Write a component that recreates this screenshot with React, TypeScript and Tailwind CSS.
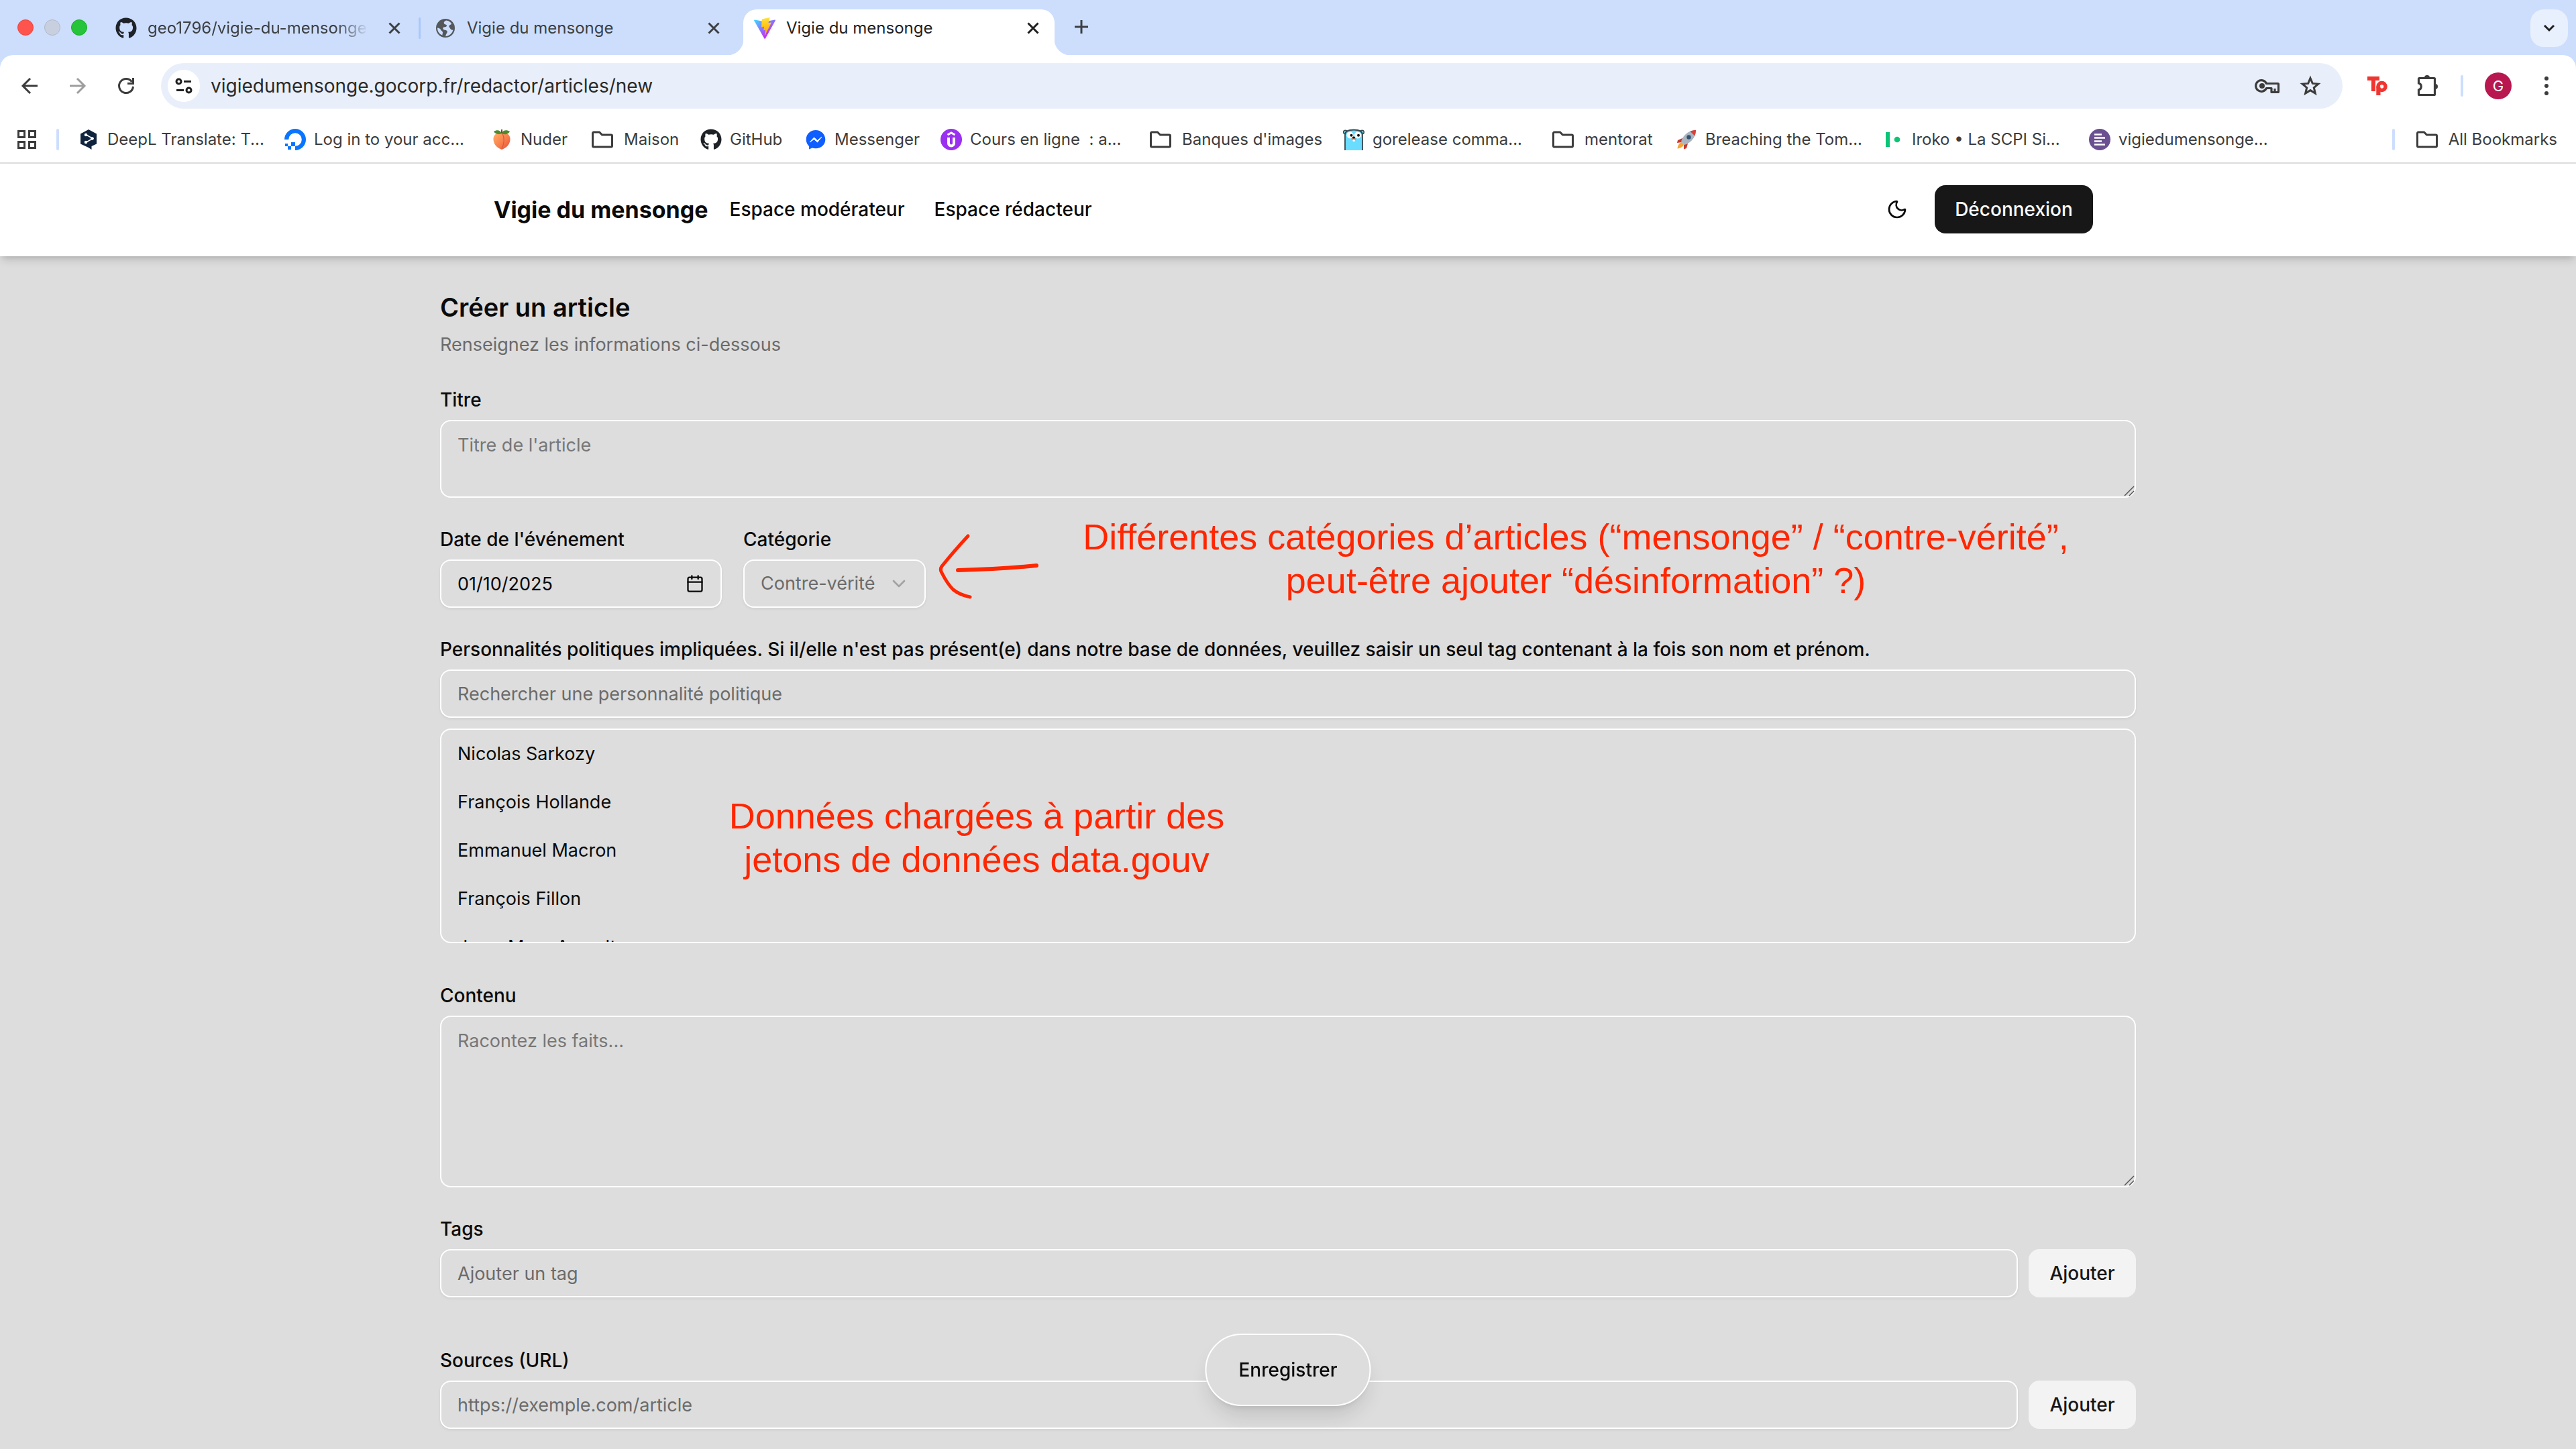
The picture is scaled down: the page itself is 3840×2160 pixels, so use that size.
import React from "react";
import { Calendar, ChevronDown, Moon } from "lucide-react";
import { FaGithub } from "react-icons/fa";

/* ---------- icons ---------- */

const CloseIcon = () => (
  <svg viewBox="0 0 32 32" className="size-8" fill="none" stroke="currentColor" strokeWidth="3">
    <path d="M8.500 8.500l15 15M23.500 8.500l-15 15" />
  </svg>
);

const ViteIcon = () => (
  <svg viewBox="0 0 256 257" className="size-8">
    <defs>
      <linearGradient id="vite-a" x1="0%" x2="58%" y1="8%" y2="79%">
        <stop offset="0%" stopColor="#41D1FF" />
        <stop offset="100%" stopColor="#BD34FE" />
      </linearGradient>
      <linearGradient id="vite-b" x1="43%" x2="50%" y1="2%" y2="89%">
        <stop offset="0%" stopColor="#FFEA83" />
        <stop offset="8%" stopColor="#FFDD35" />
        <stop offset="100%" stopColor="#FFA800" />
      </linearGradient>
    </defs>
    <path fill="url(#vite-a)" d="M255.153 37.938L134.897 252.976c-2.483 4.44-8.862 4.466-11.382.048L.875 37.958c-2.746-4.814 1.371-10.646 6.827-9.67l120.385 21.517a6.537 6.537 0 0 0 2.322-.004l117.867-21.483c5.438-.991 9.574 4.796 6.877 9.62Z" />
    <path fill="url(#vite-b)" d="M185.432.063L96.44 17.501a3.268 3.268 0 0 0-2.634 3.014l-5.474 92.456a3.268 3.268 0 0 0 3.997 3.378l24.777-5.718c2.318-.535 4.413 1.507 3.936 3.838l-7.361 36.047c-.495 2.426 1.782 4.5 4.151 3.78l15.304-4.649c2.372-.72 4.652 1.36 4.15 3.788l-11.698 56.621c-.732 3.542 3.979 5.473 5.943 2.437l1.313-2.028l72.516-144.72c1.215-2.423-.88-5.186-3.54-4.672l-25.505 4.922c-2.396.462-4.435-1.77-3.759-4.114l16.646-57.705c.677-2.35-1.37-4.583-3.769-4.113Z" />
  </svg>
);

const GlobeIcon = () => (
  <svg viewBox="0 0 32 32" className="size-8">
    <circle cx="16" cy="16" r="14" fill="#54585c" />
    <path d="M17 4.500c-2.500 1.200-4 2.700-3 4.700 1 1.600 3 .8 3.800 2.400.8 2-1.600 2.900-3.600 2.900-2 0-2.300 1.600-1.600 3 .8 1.400 4 .9 5.400 2.200 1.600 1.500.2 3.500-.6 4.900-.8 1.200-1 2.400-1.200 3.600 5.500-.4 10-4.300 11.200-9.600-2.600.4-3.700-1.200-4.600-2.600-1-1.600-2.300-2.300-1-3.900 1.200-1.300 2.500-1.300 3.300-2.300C24 7 21 4.600 17 4.500z" fill="#cddefd" />
    <path d="M4 15.500c2.300.2 4.600 1.400 5.500 3.400.8 1.600 2.300 1.600 2.500 3.300.1 1.500-.7 2.700-.5 4.200C7 25.200 4 20.800 4 15.500z" fill="#cddefd" />
  </svg>
);

const BackIcon = () => (
  <svg viewBox="0 0 32 32" className="size-8" fill="none" stroke="currentColor" strokeWidth="3">
    <path d="M28 16H6M17 5L6 16l11 11" />
  </svg>
);

const ForwardIcon = () => (
  <svg viewBox="0 0 32 32" className="size-8" fill="none" stroke="currentColor" strokeWidth="3">
    <path d="M4 16h22M15 5l11 11-11 11" />
  </svg>
);

const ReloadIcon = () => (
  <svg viewBox="0 0 32 32" className="size-8" fill="none" stroke="currentColor" strokeWidth="3">
    <path d="M26.500 17A10.500 10.500 0 1 1 24.500 9.800" />
    <path d="M18 12.500h8.500V4" />
  </svg>
);

const SiteInfoIcon = () => (
  <svg viewBox="0 0 28 28" className="size-7" fill="none" stroke="currentColor" strokeWidth="3">
    <circle cx="6.500" cy="7.500" r="3.500" />
    <path d="M14 7.500h11M3 20.500h11" />
    <circle cx="21.500" cy="20.500" r="3.500" />
  </svg>
);

const KeyIcon = () => (
  <svg viewBox="0 0 40 32" className="h-8 w-10" fill="none" stroke="currentColor" strokeWidth="3.200">
    <path d="M18.500 12.500a8.300 8.300 0 1 0 0 7H26v6h9.500a1 1 0 0 0 1-1V13.500a1 1 0 0 0-1-1z" strokeLinejoin="round" />
    <circle cx="12" cy="16" r="4" fill="currentColor" stroke="none" />
    <path d="M31 25v-5" />
  </svg>
);

const StarIcon = () => (
  <svg viewBox="0 0 32 32" className="size-8" fill="none" stroke="currentColor" strokeWidth="3">
    <path d="M16 4.500l3.300 7.900 8.500.7-6.500 5.600 2 8.300-7.300-4.400-7.300 4.400 2-8.300-6.500-5.600 8.500-.7z" />
  </svg>
);

const TpIcon = () => (
  <svg viewBox="0 0 32 32" className="size-8">
    <rect x="1" y="2" width="18" height="6" fill="#f03530" />
    <rect x="7" y="2" width="6" height="22" fill="#f03530" />
    <circle cx="22.500" cy="17" r="5.500" fill="none" stroke="#f03530" strokeWidth="5.500" />
    <rect x="14.300" y="17" width="6.200" height="13" fill="#f03530" />
  </svg>
);

const PuzzleIcon = () => (
  <svg viewBox="0 0 36 36" className="size-9" fill="none" stroke="currentColor" strokeWidth="3.200">
    <path d="M5.500 7.500a1 1 0 0 1 1-1h22a1 1 0 0 1 1 1v23a1 1 0 0 1-1 1h-22a1 1 0 0 1-1-1v-6.500a5.200 5.200 0 0 0 0-10z" />
    <path d="M14 6a4 4 0 0 1 8 0zM30 15a4 4 0 0 1 0 8z" fill="currentColor" stroke="none" />
  </svg>
);

const FolderIcon = () => (
  <svg viewBox="0 0 32 32" className="ml-1 size-8" fill="none" stroke="currentColor" strokeWidth="3">
    <path d="M1.500 6.500a1.500 1.500 0 0 1 1.500-1.500h8.500l4 4H29a1.500 1.500 0 0 1 1.500 1.500v15A1.500 1.500 0 0 1 29 27H3a1.500 1.500 0 0 1-1.500-1.500z" />
  </svg>
);

const AppsIcon = () => (
  <svg viewBox="0 0 28 28" className="size-7" fill="none" stroke="currentColor" strokeWidth="3">
    <path d="M1.500 1.500h9v9h-9zM17.500 1.500h9v9h-9zM1.500 17.500h9v9h-9zM17.500 17.500h9v9h-9z" />
  </svg>
);

const DeepLIcon = () => (
  <svg viewBox="0 0 32 32" className="size-8">
    <path d="M16 1l12 6.500v15L20.500 26v5L16 28 4 22.500v-15z" fill="#10233c" />
    <path d="M12.500 9l10 5.500-10 5.500" fill="none" stroke="#fff" strokeWidth="1.500" />
    <circle cx="12" cy="9" r="2.300" fill="#fff" />
    <circle cx="21.500" cy="14.500" r="2.300" fill="#fff" />
    <circle cx="12" cy="20" r="2.300" fill="#fff" />
  </svg>
);

const OceanIcon = () => (
  <svg viewBox="0 0 32 32" className="size-8" fill="#0a74ff">
    <path d="M0 16A16 16 0 1 1 16 32v-6.200A9.800 9.800 0 1 0 6.200 16z" />
    <path d="M10 20h6v6h-6zM5 26h5v5H5zM1 22h4v4H1z" />
  </svg>
);

const PeachIcon = () => (
  <svg viewBox="0 0 32 32" className="size-8">
    <defs>
      <linearGradient id="peach" x1="0" x2="1" y1="0" y2="1">
        <stop offset="0%" stopColor="#ffb066" />
        <stop offset="60%" stopColor="#f8794a" />
        <stop offset="100%" stopColor="#dd4b3a" />
      </linearGradient>
    </defs>
    <path d="M16 31C8 28 3 22 3.500 14.500 4 8 10 5 16 7.500 22 5 28 8 28.500 14.500 29 22 24 28 16 31z" fill="url(#peach)" />
    <path d="M17 7c3 6 3 14-1 23" fill="none" stroke="#d85a3c" strokeWidth="1.200" />
    <path d="M16 7C12 9 6 8 4 4c5-3 10-2 12 3zM16 7c1-5 7-6 12-3-2 4-7 5.500-12 3z" fill="#4f8a2e" />
    <path d="M15 1h2v6h-2z" fill="#7a4a26" />
  </svg>
);

const MessengerIcon = () => (
  <svg viewBox="0 0 32 32" className="size-8">
    <path d="M16 2C8 2 1.700 7.800 1.700 16c0 4 1.700 7.500 4.400 10v4.500l4.600-2c1.700.5 3.400.8 5.300.8 8 0 14.300-5.600 14.300-13.300S24 2 16 2z" fill="#0f5eff" />
    <path d="M7 20l6.500-7 5 4.500L25 12l-6.500 8-5-4.500z" fill="#fff" stroke="#fff" strokeWidth="1" />
  </svg>
);

const UdemyIcon = () => (
  <svg viewBox="0 0 32 32" className="size-8">
    <circle cx="16" cy="16" r="16" fill="#9a30ef" />
    <path d="M10.500 9L16 6l5.500 3" fill="none" stroke="#fff" strokeWidth="3" />
    <path d="M12 13v8.500a4 4 0 0 0 8 0V13" fill="none" stroke="#fff" strokeWidth="4" />
  </svg>
);

const GopherIcon = () => (
  <svg viewBox="0 0 32 32" className="size-8">
    <circle cx="3.500" cy="5" r="2.800" fill="#6ad7e5" stroke="#37474f" strokeWidth="1.500" />
    <circle cx="28.500" cy="5" r="2.800" fill="#6ad7e5" stroke="#37474f" strokeWidth="1.500" />
    <path d="M3 32V9C3 3 9 1.500 16 1.500s13 1.500 13 7.500v23" fill="#6adcff" stroke="#37474f" strokeWidth="1.800" />
    <circle cx="10.500" cy="9.500" r="5" fill="#fff" />
    <circle cx="22" cy="9.500" r="5" fill="#fff" />
    <circle cx="12.500" cy="9.800" r="2" fill="#111" />
    <circle cx="23" cy="9.800" r="2" fill="#111" />
    <ellipse cx="16" cy="15" rx="3.500" ry="1.800" fill="#c98b6d" />
    <ellipse cx="16" cy="13" rx="2.200" ry="1.500" fill="#111" />
    <rect x="14.500" y="16" width="3.200" height="3" rx="1" fill="#fff" />
  </svg>
);

const RocketIcon = () => (
  <svg viewBox="0 0 32 32" className="size-8">
    <path d="M10 14l-7 3-1 4 7-1zM18 22l-2 7-4 1.500 0-7z" fill="#c8372d" />
    <path d="M9 20c-4 1-6 5-6.500 9.500C7 29 11 27 12 23z" fill="#f8a531" />
    <path d="M30 2c-8 0-15 4-20 12l-2 5 5 5 5-2C26 17 30 10 30 2z" fill="#a9b4c0" />
    <path d="M30 2c-3 0-6 .6-8.500 1.700l6.800 6.800C29.400 8 30 5 30 2z" fill="#d9413a" />
    <circle cx="19.500" cy="12.500" r="3.200" fill="#33516f" />
  </svg>
);

const IrokoIcon = () => (
  <svg viewBox="0 0 32 32" className="size-8" fill="#0cc476">
    <rect x="5" y="5" width="6" height="22" />
    <circle cx="22" cy="16" r="4.300" />
  </svg>
);

const ListIcon = () => (
  <svg viewBox="0 0 32 32" className="size-8">
    <circle cx="16" cy="16" r="16" fill="#6a5091" />
    <path d="M8 8.500h11M8 13.500h16M8 18.500h11M8 23.500h16" stroke="#fff" strokeWidth="2.600" />
  </svg>
);

const ResizeGrip = () => (
  <svg viewBox="0 0 16 16" className="pointer-events-none absolute right-0.5 bottom-0.5 size-4" fill="none" stroke="#555" strokeWidth="1.500">
    <path d="M1 15L15 1M8 15l7-7" />
  </svg>
);

/* ---------- browser chrome ---------- */

const bookmarks = [
  { label: "DeepL Translate: T...", icon: <DeepLIcon />, width: "w-[308px]" },
  { label: "Log in to your acc...", icon: <OceanIcon />, width: "w-[308px]" },
  { label: "Nuder", icon: <PeachIcon />, width: "w-[146px]" },
  { label: "Maison", icon: <FolderIcon />, width: "w-[166px]", folder: true },
  { label: "GitHub", icon: <FaGithub className="size-8 text-[#1f2328]" />, width: "w-[156px]" },
  { label: "Messenger", icon: <MessengerIcon />, width: "w-[202px]" },
  { label: "Cours en ligne  : a...", icon: <UdemyIcon />, width: "w-[308px]" },
  { label: "Banques d'images", icon: <FolderIcon />, width: "w-[292px]", folder: true },
  { label: "gorelease comma...", icon: <GopherIcon />, width: "w-[308px]" },
  { label: "mentorat", icon: <FolderIcon />, width: "w-[188px]", folder: true },
  { label: "Breaching the Tom...", icon: <RocketIcon />, width: "w-[308px]" },
  { label: "Iroko • La SCPI Si...", icon: <IrokoIcon />, width: "w-[308px]" },
  { label: "vigiedumensonge...", icon: <ListIcon />, width: "w-[308px]" },
];

function TabStrip() {
  return (
    <div className="flex h-[82px] items-end bg-[#cddefd] pr-3 text-2xl text-[#3c4043]">
      <div className="flex h-[82px] w-[156px] shrink-0 items-center gap-4 pl-[26px]">
        <button aria-label="Fermer la fenêtre" className="size-6 rounded-full border border-[#e0443e] bg-[#ff544d]" />
        <button aria-label="Réduire" className="size-6 rounded-full border border-[#b0b8c8] bg-[#c8d0e0]" />
        <button aria-label="Agrandir" className="size-6 rounded-full border border-[#1aab29] bg-[#26c43a]" />
      </div>
      <div className="flex h-[68px] w-[472px] items-center pb-3 pl-4">
        <FaGithub className="size-8 shrink-0 text-[#1f2328]" />
        <div className="ml-4 w-[330px] overflow-hidden whitespace-nowrap [mask-image:linear-gradient(to_right,black_85%,transparent)]">
          geo1796/vigie-du-mensonge
        </div>
        <button aria-label="Fermer l'onglet" className="ml-[22px]"><CloseIcon /></button>
        <span className="ml-5 h-8 w-[3px] shrink-0 rounded bg-[#a8c7fa]" />
      </div>
      <div className="flex h-[68px] w-[480px] items-center gap-4 pr-7 pb-3 pl-5">
        <GlobeIcon />
        <span className="flex-1 whitespace-nowrap">Vigie du mensonge</span>
        <button aria-label="Fermer l'onglet"><CloseIcon /></button>
      </div>
      <div className="relative flex h-[68px] w-[464px] items-center gap-4 rounded-t-[20px] bg-white px-4 pb-3 text-[#1f1f1f]">
        <span className="absolute bottom-0 -left-6 size-6 bg-[radial-gradient(circle_at_0_0,transparent_24px,white_25px)]" />
        <span className="absolute -right-6 bottom-0 size-6 bg-[radial-gradient(circle_at_100%_0,transparent_24px,white_25px)]" />
        <ViteIcon />
        <span className="flex-1 whitespace-nowrap">Vigie du mensonge</span>
        <button aria-label="Fermer l'onglet"><CloseIcon /></button>
      </div>
      <button aria-label="Nouvel onglet" className="mb-[26px] ml-6">
        <svg viewBox="0 0 32 32" className="size-8" fill="none" stroke="currentColor" strokeWidth="3">
          <path d="M16 6v20M6 16h20" />
        </svg>
      </button>
      <button aria-label="Rechercher dans les onglets" className="mb-3 ml-auto flex size-14 items-center justify-center rounded-[20px] bg-[#e8f0fe] text-[#1f1f1f]">
        <svg viewBox="0 0 24 24" className="size-6" fill="none" stroke="currentColor" strokeWidth="3">
          <path d="M5 8l7 7 7-7" />
        </svg>
      </button>
    </div>
  );
}

function Toolbar() {
  return (
    <div className="bg-[#cddefd]">
      <div className="flex items-center rounded-t-[20px] bg-white px-7 py-3 text-[#3c3c3c]">
        <div className="flex w-[212px] shrink-0 gap-10">
          <button aria-label="Précédent"><BackIcon /></button>
          <button aria-label="Suivant" className="text-[#9e9e9e]"><ForwardIcon /></button>
          <button aria-label="Actualiser"><ReloadIcon /></button>
        </div>
        <div className="flex h-[68px] flex-1 items-center rounded-full bg-[#e9effa] pr-8 pl-[10px]">
          <button aria-label="Informations sur le site" className="flex size-12 items-center justify-center rounded-full bg-white text-[#1f1f1f]">
            <SiteInfoIcon />
          </button>
          <input
            aria-label="Adresse"
            defaultValue="vigiedumensonge.gocorp.fr/redactor/articles/new"
            className="ml-4 min-w-0 flex-1 bg-transparent text-[28px] text-[#2a2a2a] outline-none"
          />
          <button aria-label="Mots de passe"><KeyIcon /></button>
          <button aria-label="Ajouter aux favoris" className="ml-7"><StarIcon /></button>
        </div>
        <button aria-label="Extension Tp" className="ml-9"><TpIcon /></button>
        <button aria-label="Extensions" className="ml-10"><PuzzleIcon /></button>
        <span className="ml-8 h-8 w-1 rounded bg-[#cddefd]" />
        <button aria-label="Profil" className="ml-8 flex size-10 items-center justify-center rounded-full bg-[#b8174f] text-[22px] text-white">G</button>
        <button aria-label="Menu" className="ml-9">
          <svg viewBox="0 0 32 32" className="size-8" fill="currentColor">
            <circle cx="16" cy="5" r="3" />
            <circle cx="16" cy="16" r="3" />
            <circle cx="16" cy="27" r="3" />
          </svg>
        </button>
      </div>
    </div>
  );
}

function BookmarksBar() {
  return (
    <div className="flex h-[70px] items-center border-b-2 border-[#dddddd] bg-white pr-7 pl-[26px] text-2xl text-[#3c3c3c]">
      <button aria-label="Applications"><AppsIcon /></button>
      <span className="mr-7 ml-[30px] h-8 w-1 rounded bg-[#cddefd]" />
      {bookmarks.map((b) => (
        <a key={b.label} href="#" className={"flex shrink-0 items-center whitespace-pre " + (b.folder ? "gap-4 " : "gap-3 ") + b.width}>
          {b.icon}
          {b.label}
        </a>
      ))}
      <span className="mr-7 ml-auto h-8 w-1 rounded bg-[#cddefd]" />
      <a href="#" className="flex items-center gap-4 whitespace-nowrap">
        <FolderIcon />
        All Bookmarks
      </a>
    </div>
  );
}

/* ---------- page ---------- */

const people = ["Nicolas Sarkozy", "François Hollande", "Emmanuel Macron", "François Fillon", "Jean-Marc Ayrault"];

const labelClass = "w-fit text-[28px] leading-7 font-medium";
const fieldClass =
  "h-[72px] w-full min-w-0 rounded-2xl border-2 border-white bg-transparent px-6 text-[27px] shadow-[0_2px_4px_rgba(0,0,0,0.06)] outline-none placeholder:text-[#6b6b6b]";
const areaClass =
  "block w-full resize-none rounded-2xl border-2 border-white bg-transparent px-6 py-4 text-[27px] leading-10 outline-none placeholder:text-[#777777]";
const noteClass = "text-center font-['Liberation_Sans',Arial,sans-serif] text-[54px] leading-[65px] text-[#ff2600]";

function SiteHeader() {
  return (
    <header className="relative bg-white pt-8 pb-[34px] shadow-[0_8px_12px_-2px_rgba(0,0,0,0.13),0_4px_8px_-4px_rgba(0,0,0,0.13)]">
      <div className="mx-auto flex h-[72px] max-w-[2400px] items-center pl-4 text-[28px] font-medium">
        <a href="#" className="text-[34px] font-bold">Vigie du mensonge</a>
        <nav className="ml-8 flex gap-11">
          <a href="#">Espace modérateur</a>
          <a href="#">Espace rédacteur</a>
        </nav>
        <button aria-label="Changer de thème" className="mr-10 ml-auto">
          <Moon className="size-8" strokeWidth={2} />
        </button>
        <button className="h-[72px] w-[236px] rounded-2xl bg-[#171717] text-[#fafafa]">Déconnexion</button>
      </div>
    </header>
  );
}

function AddField({ id, label, placeholder }: { id: string; label: string; placeholder: string }) {
  return (
    <div className="flex flex-col gap-4">
      <label htmlFor={id} className={labelClass}>{label}</label>
      <div className="flex gap-4">
        <input id={id} placeholder={placeholder} className={fieldClass} />
        <button type="button" className="h-[72px] w-40 shrink-0 rounded-2xl bg-[#f3f3f3] text-[28px] font-medium text-[#171717]">Ajouter</button>
      </div>
    </div>
  );
}

function ArticleForm() {
  return (
    <main className="mx-auto w-full max-w-[2528px] pt-[52px] pb-[30px]">
      <h1 className="text-[38px] leading-[48px] font-semibold">Créer un article</h1>
      <p className="mt-3 text-[27px] leading-10 text-[#6b6b6b]">Renseignez les informations ci-dessous</p>

      <form className="mt-12 flex flex-col gap-12">
        <div className="flex flex-col gap-4">
          <label htmlFor="title" className={labelClass}>Titre</label>
          <div className="relative">
            <textarea id="title" placeholder="Titre de l'article" className={areaClass + " h-[116px]"} />
            <ResizeGrip />
          </div>
        </div>

        <div className="relative flex gap-8">
          <div className="flex w-[420px] flex-col gap-4">
            <label htmlFor="date" className={labelClass}>Date de l'événement</label>
            <div className="relative">
              <input id="date" defaultValue="01/10/2025" className={fieldClass} />
              <button type="button" aria-label="Ouvrir le calendrier" className="absolute inset-y-0 right-[26px] flex items-center">
                <Calendar className="size-7" strokeWidth={2} />
              </button>
            </div>
          </div>
          <div className="flex w-[272px] flex-col gap-4">
            <label htmlFor="category" className={labelClass}>Catégorie</label>
            <div className="relative">
              <select id="category" defaultValue="cv" className={fieldClass + " appearance-none text-[#6b6b6b]"}>
                <option value="cv">Contre-vérité</option>
                <option value="m">Mensonge</option>
              </select>
              <ChevronDown className="pointer-events-none absolute inset-y-0 right-6 my-auto size-8 text-[#a3a3a3]" strokeWidth={2} />
            </div>
          </div>
          <svg viewBox="0 0 160 110" className="absolute top-0 left-[736px] h-[110px] w-40" fill="none" stroke="#ff2600" strokeWidth="6" strokeLinecap="round" strokeLinejoin="round">
            <path d="M51 9C37 24 25 38 12 54c-2 3-2 7 0 10 5 10 10 18 17 25 6 5 16 9 25 11" strokeWidth="5" />
            <path d="M36 60c38-1 78-3 117-7" />
          </svg>
          <p className={"absolute -top-[22px] left-[943px] w-[1500px] " + noteClass}>
            Différentes catégories d’articles (“mensonge” / “contre-vérité”,
            <br />
            peut-être ajouter “désinformation” ?)
          </p>
        </div>

        <div className="mb-4 flex flex-col gap-4">
          <label htmlFor="people" className={labelClass}>
            Personnalités politiques impliquées. Si il/elle n'est pas présent(e) dans notre base de données, veuillez saisir un seul tag contenant à la fois son nom et prénom.
          </label>
          <input id="people" placeholder="Rechercher une personnalité politique" className={fieldClass} />
          <div className="relative">
            <ul className="h-80 overflow-hidden rounded-2xl border-2 border-white">
              {people.map((name) => (
                <li key={name}>
                  <button type="button" className="flex h-[72px] w-full items-center px-6 text-left text-[27px]">{name}</button>
                </li>
              ))}
            </ul>
            <p className={"absolute top-[98px] left-[400px] w-[800px] " + noteClass}>
              Données chargées à partir des
              <br />
              jetons de données data.gouv
            </p>
          </div>
        </div>

        <div className="flex flex-col gap-4">
          <label htmlFor="content" className={labelClass}>Contenu</label>
          <div className="relative">
            <textarea id="content" placeholder="Racontez les faits..." className={areaClass + " h-64"} />
            <ResizeGrip />
          </div>
        </div>

        <div className="flex flex-col gap-20">
          <AddField id="tags" label="Tags" placeholder="Ajouter un tag" />
          <AddField id="sources" label="Sources (URL)" placeholder="https://exemple.com/article" />
        </div>
      </form>
    </main>
  );
}

export default function App() {
  return (
    <div className="min-h-screen bg-[#dddddd] font-['Inter','Liberation_Sans',sans-serif] text-[#0a0a0a]">
      <TabStrip />
      <Toolbar />
      <BookmarksBar />
      <SiteHeader />
      <ArticleForm />
      <button className="fixed bottom-16 left-1/2 h-[108px] -translate-x-1/2 rounded-full border-2 border-white bg-[#dddddd] px-12 text-[28px] font-medium shadow-[0_20px_30px_-6px_rgba(0,0,0,0.12),0_8px_12px_-8px_rgba(0,0,0,0.12)]">
        Enregistrer
      </button>
    </div>
  );
}
